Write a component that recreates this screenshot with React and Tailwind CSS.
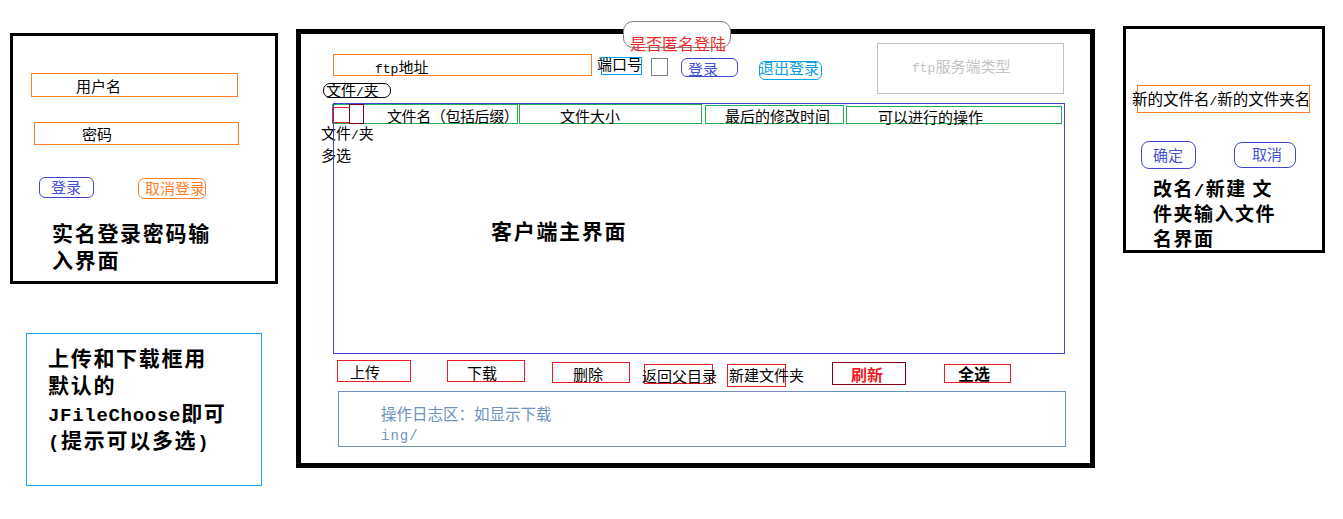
const MONO = "font-['Liberation_Mono',monospace]";

function Line({ className = "", children }) {
  return <div className={`whitespace-nowrap ${className}`}>{children}</div>;
}

export default function App() {
  const t15 = "whitespace-nowrap text-[15px] leading-[18px]";
  return (
    <div className="relative w-[1343px] h-[519px] overflow-hidden bg-white font-['Noto_Sans_CJK_SC',sans-serif] text-black">
      {/* Real-name login window */}
      <div className="absolute left-[10px] top-[33px] w-[268px] h-[251px] border-[3px] border-black pl-[18px] pt-[37px] flex flex-col items-start">
        <div className={`w-[207px] h-[24px] border border-[#ff7f27] pl-[44px] pt-[3px] ${t15}`}>用户名</div>
        <div className={`mt-[25px] ml-[3px] w-[205px] h-[23px] border border-[#ff7f27] pl-[47px] pt-[2px] ${t15}`}>密码</div>
        <div className="mt-[32px] ml-[8px] flex items-start">
          <div className="w-[55px] h-[21px] rounded-[6px] border border-[#3f48cc] pl-[11px] whitespace-nowrap text-[15px] leading-[17px] text-[#4450d6]">登录</div>
          <div className="ml-[44px] mt-[1px] w-[68px] h-[21px] rounded-[6px] border border-[#ff7f27] pl-[6px] whitespace-nowrap text-[15px] leading-[17px] text-[#ff7f27]">取消登录</div>
        </div>
        <div className="mt-[20px] ml-[21px] font-bold text-[21px] leading-[27px] tracking-[1.7px]">
          <Line className="h-[27px]">实名登录密码输</Line>
          <Line className="h-[27px]">入界面</Line>
        </div>
      </div>

      {/* Note about file chooser */}
      <div className="absolute left-[26px] top-[333px] w-[236px] h-[153px] border border-[#1e9ee8] pl-[21px] pt-[10px] font-bold text-[21px] leading-[27px] tracking-[1.7px]">
        <Line className="h-[27px]">上传和下载框用</Line>
        <Line className="h-[28px]">默认的</Line>
        <Line className="h-[27px]">
          <span className={`${MONO} text-[19px] tracking-[0.7px]`}>JFileChoose</span>即可
        </Line>
        <Line className="h-[27px]">
          <span className={`${MONO} text-[19px]`}>(</span>提示可以多选<span className={`${MONO} text-[19px]`}>)</span>
        </Line>
      </div>

      {/* Client main window */}
      <div className="absolute left-[296px] top-[29px] w-[799px] h-[439px] border-[5px] border-black">
        {/* anonymous-login oval, drawn over the frame */}
        <div className="absolute left-[322px] top-[-13px] w-[108px] h-[27px] rounded-[10px] border border-[#7f7f7f] bg-white pl-[6px] pt-[12px] whitespace-nowrap text-[16px] leading-[18px] text-[#ee2a2a]">
          是否匿名登陆
        </div>

        {/* top connection bar */}
        <div className="absolute left-[32px] top-[9px] flex items-start">
          <div className={`mt-[11px] w-[259px] h-[22px] border border-[#ff7f27] pl-[41px] pt-[3px] ${t15}`}>
            <span className={`${MONO} text-[13px]`}>ftp</span>地址
          </div>
          <div className={`ml-[9px] mt-[14px] w-[41px] h-[18px] border border-[#00a2e8] -indent-[5px] -mt-0 ${t15}`}>
            <div className="-mt-[3px]">端口号</div>
          </div>
          <div className="ml-[9px] mt-[15px] w-[17px] h-[18px] border border-[#7f7f7f]" />
          <div className={`ml-[13px] mt-[15px] w-[57px] h-[19px] rounded-[6px] border border-[#3f48cc] pl-[6px] pt-[1px] ${t15} text-[#4450d6]`}>
            登录
          </div>
          <div className={`ml-[21px] mt-[18px] w-[63px] h-[19px] rounded-[6px] border border-[#00a2e8] ${t15} text-[#0a9ee0]`}>
            <div className="-ml-[1px] -mt-[3px]">退出登录</div>
          </div>
          <div className={`ml-[55px] w-[187px] h-[51px] border border-[#c3c3c3] pl-[34px] pt-[13px] ${t15} text-[#c3c3c3]`}>
            <span className={`${MONO} text-[13px]`}>ftp</span>服务端类型
          </div>
        </div>

        {/* file / folder toggle */}
        <div className={`absolute left-[22px] top-[49px] w-[68px] h-[15px] rounded-[7px] border border-black pl-[2px] ${t15}`}>
          <div className="-mt-[3px]">
            文件<span className={`${MONO} text-[13px]`}>/</span>夹
          </div>
        </div>

        {/* multi-select label */}
        <div className="absolute left-[20px] top-[89px] whitespace-nowrap text-[15px] leading-[19px]">
          <div>
            文件<span className={`${MONO} text-[13px]`}>/</span>夹
          </div>
          <div>多选</div>
        </div>

        {/* table header */}
        <div className="absolute left-[31px] top-[70px] flex items-start">
          <div className={`w-[186px] h-[20px] border border-[#22b14c] pl-[54px] pt-[2px] tracking-[-0.4px] ${t15}`}>文件名（包括后缀）</div>
          <div className={`ml-[1px] w-[183px] h-[20px] border border-[#22b14c] pl-[40px] pt-[2px] ${t15}`}>文件大小</div>
          <div className={`ml-[3px] mt-[1px] w-[139px] h-[19px] border border-[#22b14c] pl-[19px] pt-[1px] ${t15}`}>最后的修改时间</div>
          <div className={`ml-[2px] mt-[2px] w-[216px] h-[18px] border border-[#22b14c] pl-[31px] pt-[1px] ${t15}`}>可以进行的操作</div>
        </div>
        <div className="absolute left-[31px] top-[73px] w-[18px] h-[16px] border border-[#ed1c24] bg-white" />
        <div className="absolute left-[48px] top-[70px] w-[15px] h-[20px] border border-[#880015] bg-white" />

        {/* file list */}
        <div className="absolute left-[32px] top-[69px] w-[732px] h-[251px] border border-[#3f48cc] pl-[157px] pt-[113px]">
          <div className="whitespace-nowrap font-bold text-[21px] leading-[26px] tracking-[1.7px]">客户端主界面</div>
        </div>

        {/* action buttons */}
        <div className="absolute left-[36px] top-[326px] flex items-start">
          <div className={`w-[74px] h-[22px] border border-[#ed1c24] pl-[12px] pt-[2px] ${t15}`}>上传</div>
          <div className={`ml-[36px] w-[78px] h-[22px] border border-[#ed1c24] pl-[19px] pt-[3px] ${t15}`}>下载</div>
          <div className={`ml-[27px] mt-[2px] w-[78px] h-[21px] border border-[#ed1c24] pl-[20px] pt-[2px] ${t15}`}>删除</div>
          <div className={`ml-[14px] mt-[4px] w-[69px] h-[20px] border border-[#ed1c24] pt-[2px] ${t15}`}>
            <div className="-ml-[3px]">返回父目录</div>
          </div>
          <div className={`ml-[14px] mt-[4px] w-[59px] h-[23px] border border-[#ed1c24] pl-[1px] pt-[1px] ${t15}`}>新建文件夹</div>
          <div className="ml-[46px] mt-[2px] w-[74px] h-[23px] border border-[#880015] pl-[18px] pt-[2px] whitespace-nowrap font-bold text-[16px] leading-[18px] text-[#ed1c24]">刷新</div>
          <div className="ml-[38px] mt-[4px] w-[67px] h-[19px] border border-[#ed1c24] pl-[13px] whitespace-nowrap font-bold text-[16px] leading-[17px]">全选</div>
        </div>

        {/* operation log */}
        <div className="absolute left-[37px] top-[357px] w-[728px] h-[56px] border border-[#7092be] pl-[42px] pt-[11px] whitespace-nowrap text-[15.5px] leading-[20px] text-[#7092be]">
          <div className="h-[20px]">操作日志区：如显示下载</div>
          <div className="h-[20px]">
            <span className={`${MONO} text-[14px] tracking-[1px]`}>ing/</span>
          </div>
        </div>
      </div>

      {/* Rename / new folder window */}
      <div className="absolute left-[1123px] top-[26px] w-[202px] h-[227px] border-[3px] border-black pl-[11px] pt-[56px] flex flex-col items-start">
        <div className="w-[173px] h-[28px] border border-[#ff7f27] pt-[3px] whitespace-nowrap text-[15.5px] leading-[18px]">
          <div className="-ml-[6px]">
            新的文件名<span className={`${MONO} text-[13px]`}>/</span>新的文件夹名
          </div>
        </div>
        <div className="mt-[28px] ml-[4px] flex items-start">
          <div className={`w-[55px] h-[28px] rounded-[8px] border border-[#3f48cc] pl-[11px] pt-[4px] ${t15} text-[#4450d6]`}>确定</div>
          <div className={`ml-[38px] mt-[1px] w-[62px] h-[26px] rounded-[8px] border border-[#3f48cc] pl-[17px] pt-[2px] ${t15} text-[#4450d6]`}>取消</div>
        </div>
        <div className="mt-[6px] ml-[16px] font-bold text-[19px] leading-[25px] tracking-[1.5px]">
          <Line className="h-[25px]">
            改名<span className={`${MONO} text-[17px]`}>/</span>新建 文
          </Line>
          <Line className="h-[25px]">件夹输入文件</Line>
          <Line className="h-[25px]">名界面</Line>
        </div>
      </div>
    </div>
  );
}
